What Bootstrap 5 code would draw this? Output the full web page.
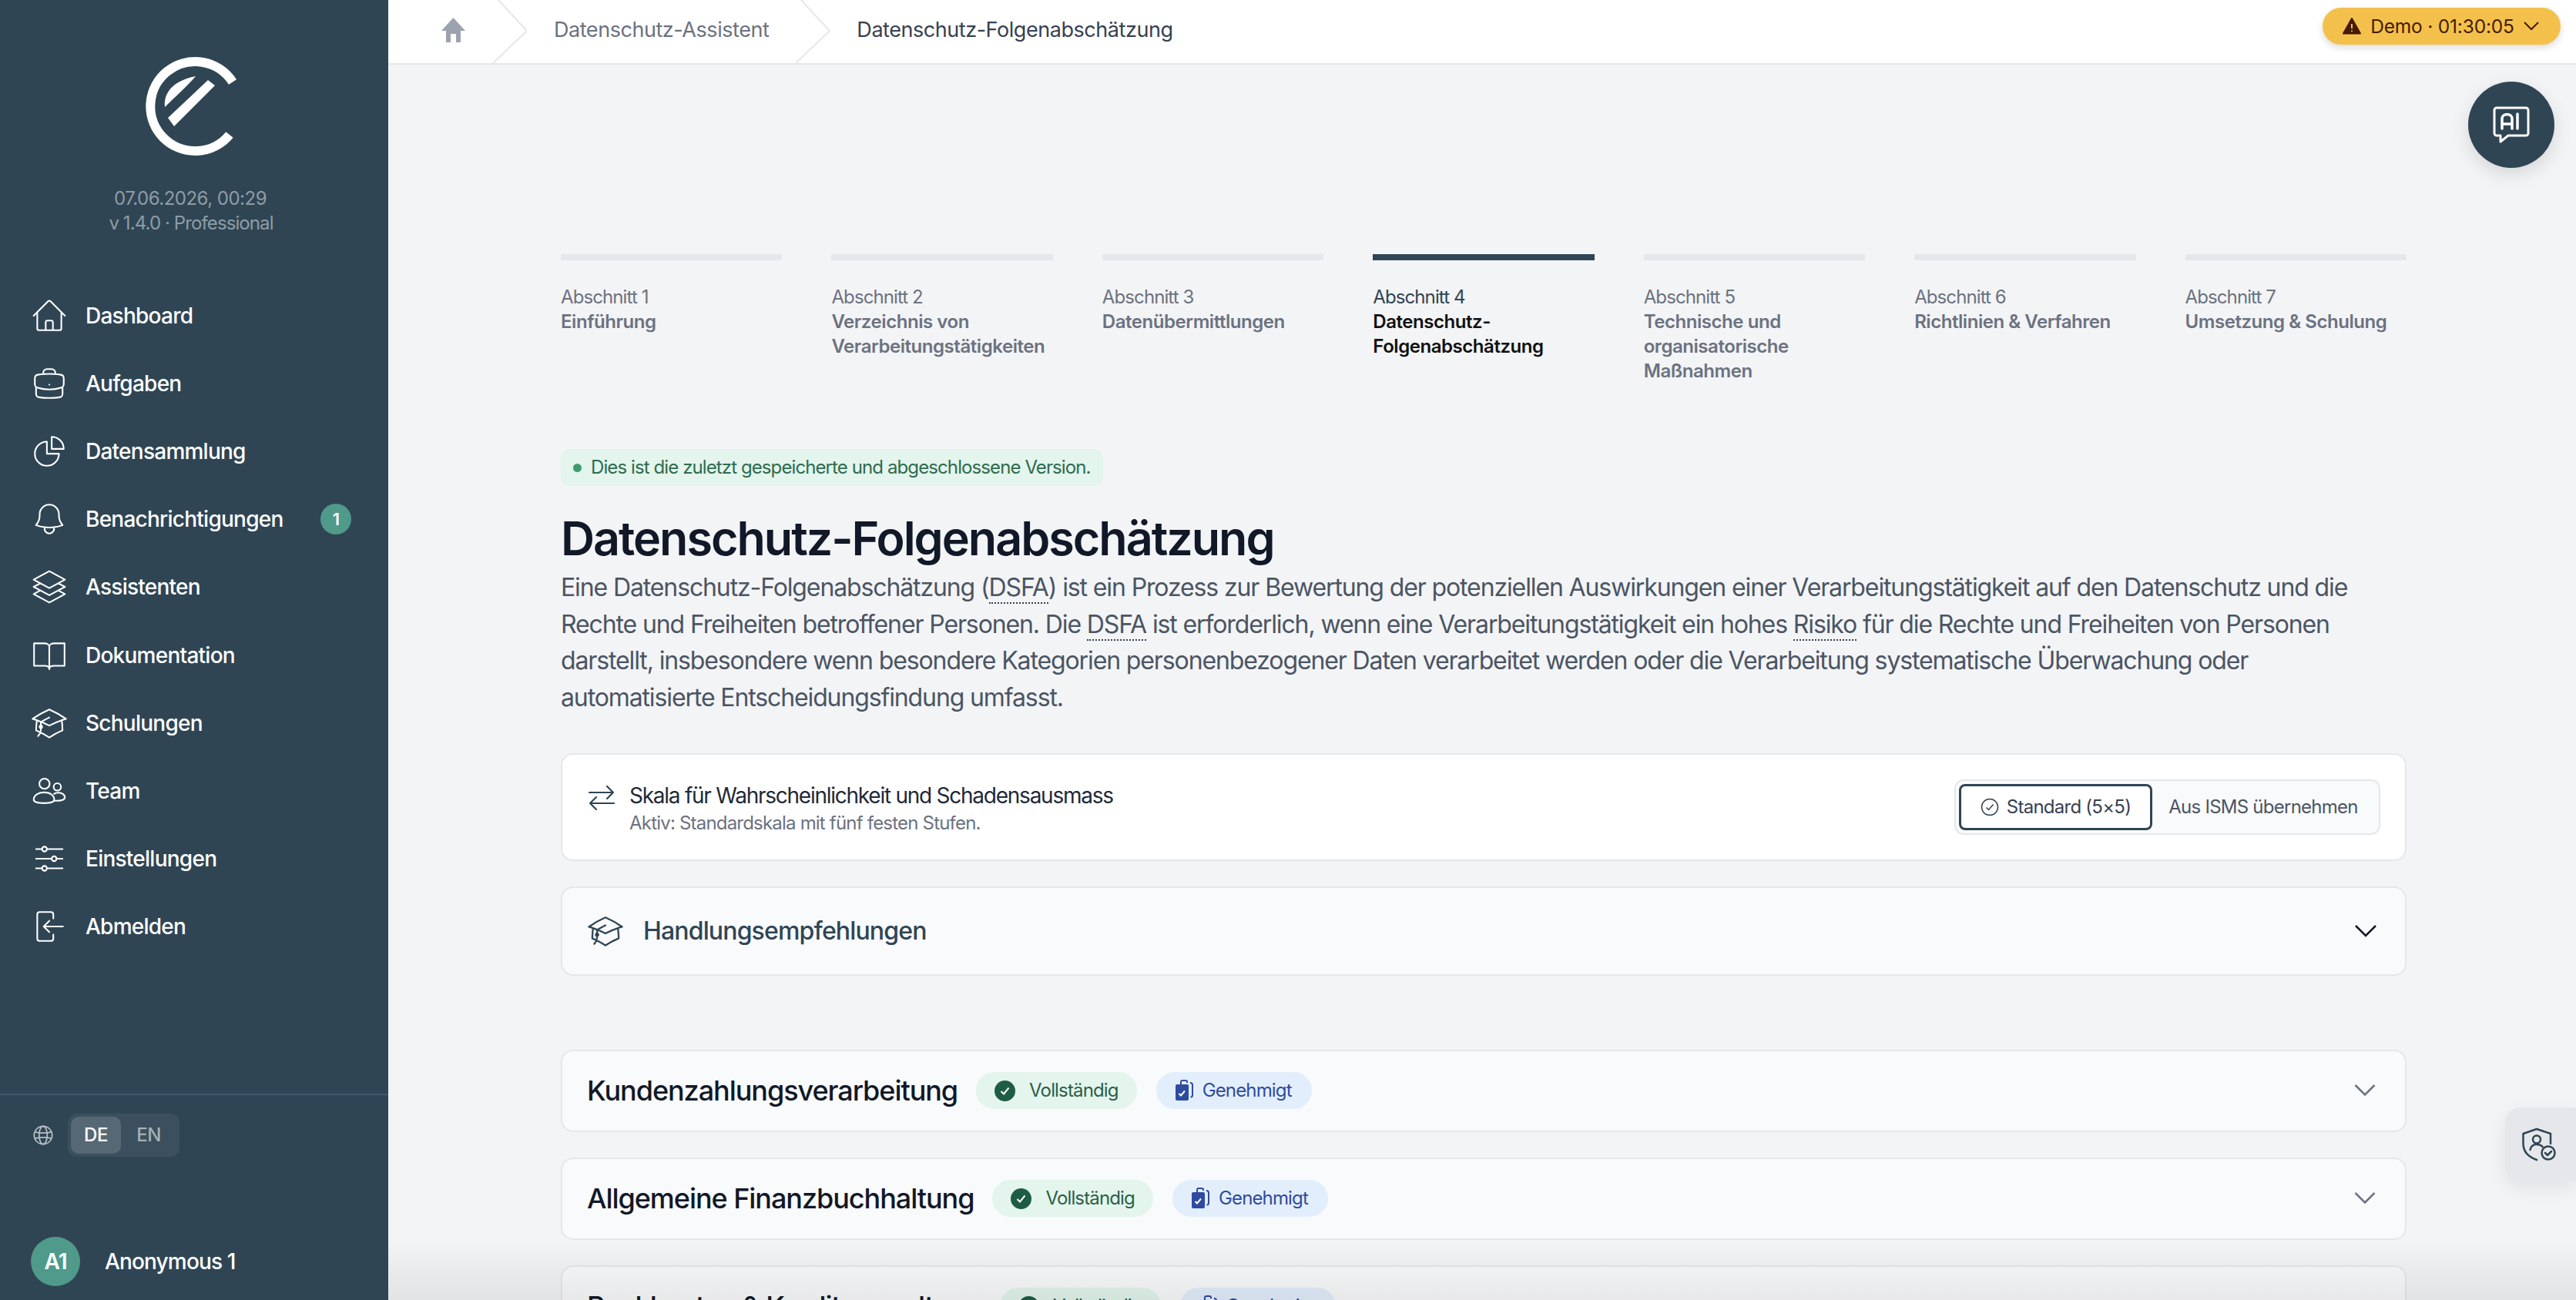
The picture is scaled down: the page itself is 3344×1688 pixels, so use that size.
<!DOCTYPE html>
<html lang="de">
<head>
  <meta charset="UTF-8">
  <title>Datenschutz-Folgenabschätzung</title>
  <link href="https://cdn.jsdelivr.net/npm/bootstrap@5.3.3/dist/css/bootstrap.min.css" rel="stylesheet">
  <style>
    html,body{height:100%}
    body{margin:0;overflow:hidden;background:#f3f4f6;font-family:"Inter","Liberation Sans",sans-serif;color:#374151}
    svg{display:block;flex-shrink:0}
    .app-shell{height:1688px;width:3344px}

    /* sidebar */
    .side-panel{width:504px;flex:0 0 504px;background:#2f4554;color:#fff}
    .side-logo{padding:74px 8px 0 0}
    .side-meta{margin-top:38px;padding-right:10px;font-size:24px;line-height:32px;color:#8f9ca5;letter-spacing:-.5px;text-align:center}
    .side-meta-line{letter-spacing:-.9px;margin-left:2px}
    .side-nav{margin-top:60px}
    .side-link{height:88.1px;padding-left:39px;padding-right:48px;color:#fff;font-size:28px;font-weight:500;letter-spacing:-.75px;text-decoration:none}
    .side-link svg{width:50px;height:50px;margin-right:22px}
    .side-badge{width:40px;height:40px;border-radius:50%;background:#4f9a8a;font-size:22px;font-weight:600}
    .side-foot{border-top:2px solid #42586a;margin-top:auto;padding-top:24px}
    .lang-row{padding-left:42px;gap:18px}
    .lang-box{padding:4px;background:#3b4f5e;border-radius:12px;height:56px}
    .lang-opt{width:72px;border-radius:10px;font-size:24px;font-weight:500;color:#a6b0b6;letter-spacing:-.5px}
    .lang-opt.is-on{width:65px;background:#566874;color:#fff}
    .user-row{padding:104px 0 18px 40px;gap:32px}
    .user-pic{width:64px;height:64px;border-radius:50%;background:#4f9a8a;font-size:28px;font-weight:600;letter-spacing:-1px}
    .user-name{font-size:28px;font-weight:500;letter-spacing:-.85px}

    /* top bar */
    .top-bar{height:84px;flex-shrink:0;background:#fff;border-bottom:2px solid #e5e7eb;padding:0 20px 0 68px}
    .crumb-row{margin-top:-4px}
    .crumb-text{font-size:27px;letter-spacing:-.45px;color:#6b7280;white-space:nowrap}
    .crumb-text.is-here{color:#374151}
    .crumb-sep{width:44px;height:82px;margin:0 35px;position:relative;top:2px}
    .demo-pill{height:48px;width:309px;margin-bottom:14px;padding:0 28px 0 26px;border-radius:24px;background:#f3c14b;color:#451a03;font-size:24.5px;letter-spacing:-.2px;box-shadow:0 4px 10px rgba(0,0,0,.14)}

    /* content */
    .page-body{padding:246px 220px 0 224px;flex:1;min-height:0;overflow:hidden}
    .page-body>*{flex-shrink:0}
    .step-grid{display:grid;grid-template-columns:repeat(7,1fr);gap:64px;height:168px}
    .step-bar{height:8px;background:#e5e7eb;margin-bottom:32px}
    .step-label{font-size:24px;line-height:32px;color:#6b7280;letter-spacing:-.9px}
    .step-name{font-size:24px;line-height:32px;font-weight:600;color:#6b7280;letter-spacing:-.45px}
    .step-now .step-bar{background:#2f4554}
    .step-now .step-label{color:#2f4554}
    .step-now .step-name{color:#111}
    .saved-note{margin-top:85px;height:48px;padding:0 16px;border-radius:12px;background:#e3f5ec;color:#2f6b4f;font-size:24px;letter-spacing:-.9px;gap:12px}
    .saved-dot{width:11px;height:11px;border-radius:50%;background:#3f9b6c}
    .page-title{margin:32px 0 4px;font-size:61px;line-height:72px;font-weight:600;color:#111827;letter-spacing:-2px}
    .page-intro{font-size:32px;line-height:47.7px;color:#4b5563;letter-spacing:-1.12px;margin:0 0 48px;width:2340px}
    .term-mark{border-bottom:2px dotted #374151}
    .box-line{border:2px solid #e5e7eb;border-radius:16px}
    .scale-box{height:140px;background:#fff;padding:0 32px 0 33px;margin-bottom:33px}
    .scale-gap{gap:18px;margin-top:7px}
    .scale-title{font-size:28px;line-height:36px;color:#1f2937;letter-spacing:-1.25px}
    .scale-sub{font-size:24px;line-height:36px;color:#6b7280;letter-spacing:-.8px}
    .scale-seg{height:72px;width:553px;padding:4px;border:2px solid #e5e7eb;border-radius:12px;background:#f9fafb}
    .seg-on{width:251px;height:60px;border:3px solid #2f4554;border-radius:8px;background:#fff;font-size:24px;letter-spacing:-.75px;gap:10px;color:#374151}
    .seg-off{flex:1;font-size:24px;letter-spacing:-.75px;color:#4b5563;padding-right:2px}
    .tip-box{height:116px;background:#f9fafb;padding:0 36px 0 31px;margin-bottom:96px}
    .tip-title{font-size:32px;font-weight:500;color:#2f4554;letter-spacing:-.85px}
    .proc-row{height:107px;background:#f9fafb;padding:0 38px 0 32px;margin-bottom:33px}
    .proc-name{font-size:36px;font-weight:500;color:#111827;letter-spacing:-1.05px;margin-right:24px;white-space:nowrap}
    .state-tag{height:48px;border-radius:24px;font-size:24px;letter-spacing:-.85px;padding:0 24px;gap:18px}
    .state-ok{background:#e3f5ec;color:#2a5f4a;margin-right:25px}
    .state-blue{background:#e3eefc;color:#2f4ba0;gap:12px;padding-right:26px}

    /* floating items */
    .ai-fab{position:absolute;top:106px;right:28px;width:112px;height:112px;border-radius:50%;background:#2f4554;box-shadow:0 8px 24px rgba(0,0,0,.12)}
    .side-tab{position:absolute;top:1438px;right:0;width:92px;height:96px;background:#e5e7eb;border-radius:20px 0 0 20px;box-shadow:0 8px 24px rgba(0,0,0,.08)}
    .bottom-fade{position:absolute;left:504px;right:0;bottom:0;height:80px;background:linear-gradient(to bottom,rgba(0,0,0,0),rgba(0,0,0,.07));pointer-events:none}
  </style>
</head>
<body>
<div class="app-shell d-flex position-relative">

  <!-- sidebar -->
  <aside class="side-panel d-flex flex-column">
    <div class="side-logo d-flex justify-content-center">
      <svg width="118" height="130" viewBox="189 74 118 130">
        <path d="M302 106.5A58 58 0 1 0 298 175" fill="none" stroke="#fff" stroke-width="12"/>
        <path d="M214 139C212 118 228 104 254 99C240 115 228 125 214 139Z" fill="#fff"/>
        <path d="M270 104L279 111L226 164L218 153Z" fill="#fff"/>
      </svg>
    </div>
    <div class="side-meta">07.06.2026, 00:29<div class="side-meta-line">v 1.4.0 · Professional</div></div>
    <nav class="side-nav d-flex flex-column">
      <a class="side-link d-flex align-items-center" href="#"><svg viewBox="0 0 24 24" fill="none" stroke="#fff" stroke-width="1" stroke-linecap="round" stroke-linejoin="round"><path d="m2.25 12 8.954-8.955c.44-.439 1.152-.439 1.591 0L21.75 12M4.5 9.75v10.125c0 .621.504 1.125 1.125 1.125H9.75v-4.875c0-.621.504-1.125 1.125-1.125h2.25c.621 0 1.125.504 1.125 1.125V21h4.125c.621 0 1.125-.504 1.125-1.125V9.75M8.25 21h8.25"/></svg>Dashboard</a>
      <a class="side-link d-flex align-items-center" href="#"><svg viewBox="0 0 24 24" fill="none" stroke="#fff" stroke-width="1" stroke-linecap="round" stroke-linejoin="round"><path d="M20.25 14.15v4.25c0 1.094-.787 2.036-1.872 2.18-2.087.277-4.216.42-6.378.42s-4.291-.143-6.378-.42c-1.085-.144-1.872-1.086-1.872-2.18v-4.25m16.5 0a2.18 2.18 0 0 0 .75-1.661V8.706c0-1.081-.768-2.015-1.837-2.175a48.114 48.114 0 0 0-3.413-.387m4.5 8.006c-.194.165-.42.295-.673.38A23.978 23.978 0 0 1 12 15.75c-2.648 0-5.195-.429-7.577-1.22a2.016 2.016 0 0 1-.673-.38m0 0A2.18 2.18 0 0 1 3 12.489V8.706c0-1.081.768-2.015 1.837-2.175a48.111 48.111 0 0 1 3.413-.387m7.5 0V5.25A2.25 2.25 0 0 0 13.5 3h-3a2.25 2.25 0 0 0-2.25 2.25v.894m7.5 0a48.667 48.667 0 0 0-7.5 0M12 12.75h.008v.008H12v-.008Z"/></svg>Aufgaben</a>
      <a class="side-link d-flex align-items-center" href="#"><svg viewBox="0 0 24 24" fill="none" stroke="#fff" stroke-width="1" stroke-linecap="round" stroke-linejoin="round"><path d="M10.5 6a7.5 7.5 0 1 0 7.5 7.5h-7.5V6Z"/><path d="M13.5 10.5H21A7.5 7.5 0 0 0 13.5 3v7.5Z"/></svg>Datensammlung</a>
      <a class="side-link d-flex align-items-center" href="#"><svg viewBox="0 0 24 24" fill="none" stroke="#fff" stroke-width="1" stroke-linecap="round" stroke-linejoin="round"><path d="M14.857 17.082a23.848 23.848 0 0 0 5.454-1.31A8.967 8.967 0 0 1 18 9.75V9A6 6 0 0 0 6 9v.75a8.967 8.967 0 0 1-2.312 6.022c1.733.64 3.56 1.085 5.455 1.31m5.714 0a24.255 24.255 0 0 1-5.714 0m5.714 0a3 3 0 1 1-5.714 0"/></svg><span class="flex-grow-1">Benachrichtigungen</span><span class="side-badge d-flex align-items-center justify-content-center">1</span></a>
      <a class="side-link d-flex align-items-center" href="#"><svg viewBox="0 0 24 24" fill="none" stroke="#fff" stroke-width="1" stroke-linecap="round" stroke-linejoin="round"><path d="M6.429 9.75 2.25 12l4.179 2.25m0-4.5 5.571 3 5.571-3m-11.142 0L2.25 7.5 12 2.25l9.75 5.25-4.179 2.25m0 0L21.75 12l-4.179 2.25m0 0 4.179 2.25L12 21.75 2.25 16.5l4.179-2.25m11.142 0-5.571 3-5.571-3"/></svg>Assistenten</a>
      <a class="side-link d-flex align-items-center" href="#"><svg viewBox="0 0 24 24" fill="none" stroke="#fff" stroke-width="1" stroke-linecap="round" stroke-linejoin="round"><path d="M2.5 4.5H9c1.6 0 3 .8 3 2 0-1.2 1.4-2 3-2h6.5v14H15c-1.6 0-3 .6-3 2 0-1.4-1.4-2-3-2H2.5z"/><path d="M12 6.5v14"/></svg>Dokumentation</a>
      <a class="side-link d-flex align-items-center" href="#"><svg viewBox="0 0 24 24" fill="none" stroke="#fff" stroke-width="1" stroke-linecap="round" stroke-linejoin="round"><path d="M4.26 10.147a60.438 60.438 0 0 0-.491 6.347A48.62 48.62 0 0 1 12 20.904a48.62 48.62 0 0 1 8.232-4.41 60.46 60.46 0 0 0-.491-6.347m-15.482 0a50.636 50.636 0 0 0-2.658-.813A59.906 59.906 0 0 1 12 3.493a59.903 59.903 0 0 1 10.399 5.84c-.896.248-1.783.52-2.658.814m-15.482 0A50.717 50.717 0 0 1 12 13.489a50.702 50.702 0 0 1 7.74-3.342M6.75 15a.75.75 0 1 0 0-1.5.75.75 0 0 0 0 1.5Zm0 0v-3.675A55.378 55.378 0 0 1 12 8.443m-7.007 11.55A5.981 5.981 0 0 0 6.75 15.75v-1.5"/></svg>Schulungen</a>
      <a class="side-link d-flex align-items-center" href="#"><svg viewBox="0 0 24 24" fill="none" stroke="#fff" stroke-width="1" stroke-linecap="round" stroke-linejoin="round"><circle cx="9" cy="7.5" r="3.2"/><circle cx="17" cy="9.5" r="2.3"/><path d="M2.3 17.5c0-2.8 3-4.6 6.4-4.6 3.7 0 6.4 1.8 6.4 4.6 0 1.3-2.8 2.1-6.4 2.1s-6.4-.8-6.4-2.1z"/><path d="M15 13.8c.8-.5 1.7-.7 2.7-.7 2.4 0 4 1.4 4 3 0 1.5-2.9 2.2-6.5 2"/></svg>Team</a>
      <a class="side-link d-flex align-items-center" href="#"><svg viewBox="0 0 24 24" fill="none" stroke="#fff" stroke-width="1" stroke-linecap="round" stroke-linejoin="round"><path d="M10.5 6h9.75M10.5 6a1.5 1.5 0 1 1-3 0m3 0a1.5 1.5 0 1 0-3 0M3.75 6H7.5m3 12h9.75m-9.75 0a1.5 1.5 0 0 1-3 0m3 0a1.5 1.5 0 0 0-3 0m-3.75 0H7.5m9-6h3.75m-3.75 0a1.5 1.5 0 0 1-3 0m3 0a1.5 1.5 0 0 0-3 0m-9.75 0h9.75"/></svg>Einstellungen</a>
      <a class="side-link d-flex align-items-center" href="#"><svg viewBox="0 0 24 24" fill="none" stroke="#fff" stroke-width="1" stroke-linecap="round" stroke-linejoin="round"><path d="M14.5 7V4.5c0-.9-.6-1.5-1.5-1.5H6c-.9 0-1.5.6-1.5 1.5v15c0 .9.6 1.5 1.5 1.5h7c.9 0 1.5-.6 1.5-1.5V17"/><path d="M20.5 12H8.5m3.5-3.5L8.5 12l3.5 3.5"/></svg>Abmelden</a>
    </nav>
    <div class="side-foot">
      <div class="lang-row d-flex align-items-center">
        <svg width="28" height="28" viewBox="0 0 24 24" fill="none" stroke="#b6bfc4" stroke-width="1.5"><circle cx="12" cy="12" r="10"/><ellipse cx="12" cy="12" rx="4.5" ry="10"/><path d="M3 8.5c5 1.5 13 1.5 18 0M3 15.5c5-1.5 13-1.5 18 0"/></svg>
        <div class="lang-box d-flex">
          <div class="lang-opt is-on d-flex align-items-center justify-content-center">DE</div>
          <div class="lang-opt d-flex align-items-center justify-content-center">EN</div>
        </div>
      </div>
      <div class="user-row d-flex align-items-center">
        <div class="user-pic d-flex align-items-center justify-content-center">A1</div>
        <div class="user-name">Anonymous 1</div>
      </div>
    </div>
  </aside>

  <!-- main -->
  <div class="flex-grow-1 d-flex flex-column" style="min-width:0">
    <header class="top-bar d-flex align-items-center justify-content-between">
      <div class="crumb-row d-flex align-items-center">
        <svg width="33" height="32" viewBox="0 0 33 32"><path d="M16.5 0L32 17H26V32H20V21H13V32H7V17H1Z" fill="#9ca3af"/></svg>
        <svg class="crumb-sep" viewBox="0 0 44 82" fill="none" stroke="#e5e7eb" stroke-width="2" preserveAspectRatio="none"><path d="M7 0L44 40L0 82"/></svg>
        <span class="crumb-text">Datenschutz-Assistent</span>
        <svg class="crumb-sep" viewBox="0 0 44 82" fill="none" stroke="#e5e7eb" stroke-width="2" preserveAspectRatio="none"><path d="M7 0L44 40L0 82"/></svg>
        <span class="crumb-text is-here">Datenschutz-Folgenabschätzung</span>
      </div>
      <div class="demo-pill d-flex align-items-center justify-content-between">
        <svg width="24" height="22" viewBox="0 0 24 22"><path d="M12 1L23 20.5H1Z" fill="#451a03" stroke="#451a03" stroke-width="2" stroke-linejoin="round"/><path d="M12 8v6M12 16.5v1.5" stroke="#f3c14b" stroke-width="2"/></svg>
        <span>Demo · 01:30:05</span>
        <svg width="20" height="12" viewBox="0 0 20 12" fill="none" stroke="#451a03" stroke-width="2"><path d="M1 1l9 9 9-9"/></svg>
      </div>
    </header>

    <main class="page-body d-flex flex-column">
      <div class="step-grid">
        <div><div class="step-bar"></div><div class="step-label">Abschnitt 1</div><div class="step-name">Einführung</div></div>
        <div><div class="step-bar"></div><div class="step-label">Abschnitt 2</div><div class="step-name">Verzeichnis von Verarbeitungstätigkeiten</div></div>
        <div><div class="step-bar"></div><div class="step-label">Abschnitt 3</div><div class="step-name">Datenübermittlungen</div></div>
        <div class="step-now"><div class="step-bar"></div><div class="step-label">Abschnitt 4</div><div class="step-name">Datenschutz-Folgenabschätzung</div></div>
        <div><div class="step-bar"></div><div class="step-label">Abschnitt 5</div><div class="step-name">Technische und organisatorische Maßnahmen</div></div>
        <div><div class="step-bar"></div><div class="step-label">Abschnitt 6</div><div class="step-name">Richtlinien &amp; Verfahren</div></div>
        <div><div class="step-bar"></div><div class="step-label">Abschnitt 7</div><div class="step-name">Umsetzung &amp; Schulung</div></div>
      </div>

      <div class="saved-note d-inline-flex align-items-center align-self-start"><span class="saved-dot"></span>Dies ist die zuletzt gespeicherte und abgeschlossene Version.</div>
      <h1 class="page-title">Datenschutz-Folgenabschätzung</h1>
      <p class="page-intro">Eine Datenschutz-Folgenabschätzung (<span class="term-mark">DSFA</span>) ist ein Prozess zur Bewertung der potenziellen Auswirkungen einer Verarbeitungstätigkeit auf den Datenschutz und die Rechte und Freiheiten betroffener Personen. Die <span class="term-mark">DSFA</span> ist erforderlich, wenn eine Verarbeitungstätigkeit ein hohes <span class="term-mark">Risiko</span> für die Rechte und Freiheiten von Personen darstellt, insbesondere wenn besondere Kategorien personenbezogener Daten verarbeitet werden oder die Verarbeitung systematische Überwachung oder automatisierte Entscheidungsfindung umfasst.</p>

      <div class="scale-box box-line d-flex align-items-center justify-content-between">
        <div class="scale-gap d-flex align-items-start">
          <svg class="mt-1" width="36" height="34" viewBox="0 0 36 34" fill="none" stroke="#2f4554" stroke-width="2.2" stroke-linecap="round" stroke-linejoin="round"><path d="M2 10H33M25 2l8 8-8 8"/><path d="M34 24H3M11 16l-8 8 8 8"/></svg>
          <div>
            <div class="scale-title">Skala für Wahrscheinlichkeit und Schadensausmass</div>
            <div class="scale-sub">Aktiv: Standardskala mit fünf festen Stufen.</div>
          </div>
        </div>
        <div class="scale-seg d-flex align-items-center">
          <div class="seg-on d-flex align-items-center justify-content-center">
            <svg width="24" height="24" viewBox="0 0 24 24" fill="none" stroke="#2f4554" stroke-width="1.5"><circle cx="12" cy="12" r="10.5"/><path d="M7.5 12.5l3 3 6-7"/></svg>
            Standard (5×5)
          </div>
          <div class="seg-off d-flex align-items-center justify-content-center">Aus ISMS übernehmen</div>
        </div>
      </div>

      <div class="tip-box box-line d-flex align-items-center justify-content-between">
        <div class="d-flex align-items-center gap-4">
          <svg width="50" height="50" viewBox="0 0 24 24" fill="none" stroke="#2f4554" stroke-width="1.1" stroke-linecap="round" stroke-linejoin="round"><path d="M4.26 10.147a60.438 60.438 0 0 0-.491 6.347A48.62 48.62 0 0 1 12 20.904a48.62 48.62 0 0 1 8.232-4.41 60.46 60.46 0 0 0-.491-6.347m-15.482 0a50.636 50.636 0 0 0-2.658-.813A59.906 59.906 0 0 1 12 3.493a59.903 59.903 0 0 1 10.399 5.84c-.896.248-1.783.52-2.658.814m-15.482 0A50.717 50.717 0 0 1 12 13.489a50.702 50.702 0 0 1 7.74-3.342M6.75 15a.75.75 0 1 0 0-1.5.75.75 0 0 0 0 1.5Zm0 0v-3.675A55.378 55.378 0 0 1 12 8.443m-7.007 11.55A5.981 5.981 0 0 0 6.75 15.75v-1.5"/></svg>
          <span class="tip-title">Handlungsempfehlungen</span>
        </div>
        <svg width="30" height="18" viewBox="0 0 30 18" fill="none" stroke="#111827" stroke-width="2.5"><path d="M2 2l13 13L28 2"/></svg>
      </div>

      <div class="proc-row box-line d-flex align-items-center">
        <span class="proc-name">Kundenzahlungsverarbeitung</span>
        <span class="state-tag state-ok d-flex align-items-center"><svg width="27" height="27" viewBox="0 0 27 27"><circle cx="13.5" cy="13.5" r="13.5" fill="#1f5c45"/><path d="M8.5 14l3.5 3.5 6.5-8" fill="none" stroke="#fff" stroke-width="2"/></svg>Vollständig</span>
        <span class="state-tag state-blue d-flex align-items-center"><svg width="24" height="28" viewBox="0 0 24 28"><path d="M8 6V2.5C8 1.5 9 1 10 1h4c1 0 2 .5 2 1.5V4" fill="none" stroke="#2f4ba0" stroke-width="2"/><path d="M20 4c2 0 3 1 3 2.5V20c0 1.5-1 2.5-2.5 2.5" fill="none" stroke="#2f4ba0" stroke-width="2"/><rect x="1" y="6" width="17" height="21" rx="2" fill="#2f4ba0"/><path d="M5.5 18l2.5 2.5 5-6" fill="none" stroke="#fff" stroke-width="2"/></svg>Genehmigt</span>
        <svg class="ms-auto" width="28" height="18" viewBox="0 0 28 18" fill="none" stroke="#6b7280" stroke-width="2.5"><path d="M1.5 2L14 14.5 26.5 2"/></svg>
      </div>
      <div class="proc-row box-line d-flex align-items-center">
        <span class="proc-name">Allgemeine Finanzbuchhaltung</span>
        <span class="state-tag state-ok d-flex align-items-center"><svg width="27" height="27" viewBox="0 0 27 27"><circle cx="13.5" cy="13.5" r="13.5" fill="#1f5c45"/><path d="M8.5 14l3.5 3.5 6.5-8" fill="none" stroke="#fff" stroke-width="2"/></svg>Vollständig</span>
        <span class="state-tag state-blue d-flex align-items-center"><svg width="24" height="28" viewBox="0 0 24 28"><path d="M8 6V2.5C8 1.5 9 1 10 1h4c1 0 2 .5 2 1.5V4" fill="none" stroke="#2f4ba0" stroke-width="2"/><path d="M20 4c2 0 3 1 3 2.5V20c0 1.5-1 2.5-2.5 2.5" fill="none" stroke="#2f4ba0" stroke-width="2"/><rect x="1" y="6" width="17" height="21" rx="2" fill="#2f4ba0"/><path d="M5.5 18l2.5 2.5 5-6" fill="none" stroke="#fff" stroke-width="2"/></svg>Genehmigt</span>
        <svg class="ms-auto" width="28" height="18" viewBox="0 0 28 18" fill="none" stroke="#6b7280" stroke-width="2.5"><path d="M1.5 2L14 14.5 26.5 2"/></svg>
      </div>
      <div class="proc-row box-line d-flex align-items-center">
        <span class="proc-name">Bankkonten &amp; Kreditverwaltung</span>
        <span class="state-tag state-ok d-flex align-items-center"><svg width="27" height="27" viewBox="0 0 27 27"><circle cx="13.5" cy="13.5" r="13.5" fill="#1f5c45"/><path d="M8.5 14l3.5 3.5 6.5-8" fill="none" stroke="#fff" stroke-width="2"/></svg>Vollständig</span>
        <span class="state-tag state-blue d-flex align-items-center"><svg width="24" height="28" viewBox="0 0 24 28"><path d="M8 6V2.5C8 1.5 9 1 10 1h4c1 0 2 .5 2 1.5V4" fill="none" stroke="#2f4ba0" stroke-width="2"/><path d="M20 4c2 0 3 1 3 2.5V20c0 1.5-1 2.5-2.5 2.5" fill="none" stroke="#2f4ba0" stroke-width="2"/><rect x="1" y="6" width="17" height="21" rx="2" fill="#2f4ba0"/><path d="M5.5 18l2.5 2.5 5-6" fill="none" stroke="#fff" stroke-width="2"/></svg>Genehmigt</span>
        <svg class="ms-auto" width="28" height="18" viewBox="0 0 28 18" fill="none" stroke="#6b7280" stroke-width="2.5"><path d="M1.5 2L14 14.5 26.5 2"/></svg>
      </div>
    </main>
  </div>

  <!-- floating -->
  <div class="ai-fab d-flex align-items-center justify-content-center">
    <svg width="48" height="48" viewBox="0 0 48 48" fill="none" stroke="#fff" stroke-width="3" stroke-linecap="round" stroke-linejoin="round"><path d="M5 2h38c1.5 0 3 1.2 3 3v30c0 1.8-1.5 3-3 3H20l-10 8v-8H5c-1.5 0-3-1.2-3-3V5c0-1.8 1.5-3 3-3z"/><path stroke-width="3.5" d="M12 29V16c0-7.5 13-7.5 13 0v13M12 23h13M32 10v19"/></svg>
  </div>
  <div class="side-tab d-flex align-items-center justify-content-center">
    <svg class="me-1" width="44" height="44" viewBox="0 0 44 44" fill="none" stroke="#2f4554" stroke-width="2.5" stroke-linecap="round" stroke-linejoin="round"><path d="M37 21V8L19 2 1.5 8v13c0 10 6 17 17.5 21"/><circle cx="19" cy="15.5" r="5"/><path d="M10.5 29c1-5 4.5-7 8.5-7s6 1 7.5 3"/><circle cx="34" cy="33" r="8.5"/><path d="M30 33l3 3 5-5"/></svg>
  </div>
  <div class="bottom-fade"></div>
</div>
<script src="https://cdn.jsdelivr.net/npm/bootstrap@5.3.3/dist/js/bootstrap.bundle.min.js"></script>
</body>
</html>
